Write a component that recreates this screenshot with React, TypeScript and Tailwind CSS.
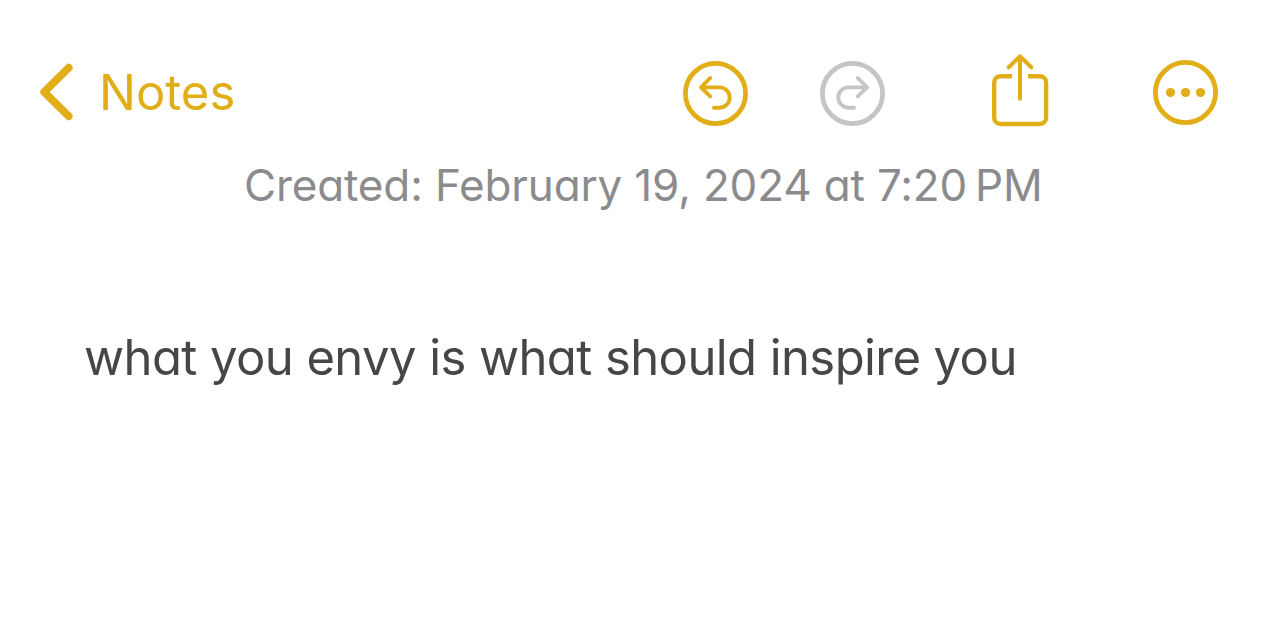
import React from "react";

type IconProps = { className?: string };

const BackChevron = ({ className }: IconProps) => (
  <svg width="34" height="58" viewBox="0 0 34 58" fill="none" className={className}>
    <path
      d="M29.7 4.7 5.2 29l24.500 24.300"
      stroke="currentColor"
      strokeWidth="7.8"
      strokeLinecap="round"
      strokeLinejoin="round"
    />
  </svg>
);

const UndoIcon = ({ className }: IconProps) => (
  <svg width="65" height="65" viewBox="0 0 65 65" fill="none" className={className}>
    <circle cx="32.5" cy="32.5" r="30.1" stroke="currentColor" strokeWidth="4.8" />
    <path
      d="M27.2 17 18 26.4l9.2 9M18 26.4h18.6a10.15 10.15 0 0 1 0 20.3H31"
      stroke="currentColor"
      strokeWidth="3.9"
      strokeLinecap="round"
      strokeLinejoin="round"
    />
  </svg>
);

const ShareIcon = ({ className }: IconProps) => (
  <svg width="58" height="73" viewBox="0 0 58 73" fill="none" className={className}>
    <path
      d="M21 22.2H9.500a6.3 6.3 0 0 0-6.3 6.3v35.2A6.3 6.3 0 0 0 9.500 70h39.300a6.3 6.3 0 0 0 6.3-6.3V28.500a6.3 6.3 0 0 0-6.3-6.3H37"
      stroke="currentColor"
      strokeWidth="4.4"
    />
    <path
      d="M29 44.800V2.500M17.700 13.300 29 2.300l11.300 11"
      stroke="currentColor"
      strokeWidth="4"
      strokeLinecap="round"
      strokeLinejoin="round"
    />
  </svg>
);

const MoreIcon = ({ className }: IconProps) => (
  <svg width="65" height="65" viewBox="0 0 65 65" fill="none" className={className}>
    <circle cx="32.5" cy="32.5" r="30.1" stroke="currentColor" strokeWidth="4.8" />
    <circle cx="17.500" cy="32.5" r="4.6" fill="currentColor" />
    <circle cx="32.5" cy="32.5" r="4.6" fill="currentColor" />
    <circle cx="47.500" cy="32.5" r="4.6" fill="currentColor" />
  </svg>
);

const App = () => {
  return (
    <div className="h-[644px] w-[1284px] overflow-hidden bg-white font-['Inter',sans-serif] [font-feature-settings:'cv11']">
      <header className="flex h-[154px] items-start justify-between pl-[39px] pr-[66px] text-[#e2ae18]">
        <button className="mt-[62px] flex h-[60px] items-center">
          <BackChevron />
          <span className="ml-[26px] pt-0.5 text-[49px] leading-[60px]">
            Notes
          </span>
        </button>
        <div className="flex items-start">
          <button aria-label="Undo" className="mt-[61px]">
            <UndoIcon />
          </button>
          <button aria-label="Redo" className="ml-[72px] mt-[61px] text-[#c5c5c5]" disabled>
            <UndoIcon className="-scale-x-100" />
          </button>
          <button aria-label="Share" className="ml-[106px] mt-[54px]">
            <ShareIcon />
          </button>
          <button aria-label="More" className="ml-[104px] mt-[60px]">
            <MoreIcon />
          </button>
        </div>
      </header>

      <p className="ml-[244px] mt-[3px] whitespace-nowrap text-[44px] leading-[56px] tracking-[-0.14px] text-[#8b8b8d]">
        Created: February 19, 2024 at 7:20{"\u202f"}PM
      </p>

      <p className="ml-[84px] mt-[114px] whitespace-nowrap text-[49px] leading-[62px] tracking-[-0.58px] text-[#464646]">
        what you envy is what should inspire you
      </p>
    </div>
  );
};

export default App;
